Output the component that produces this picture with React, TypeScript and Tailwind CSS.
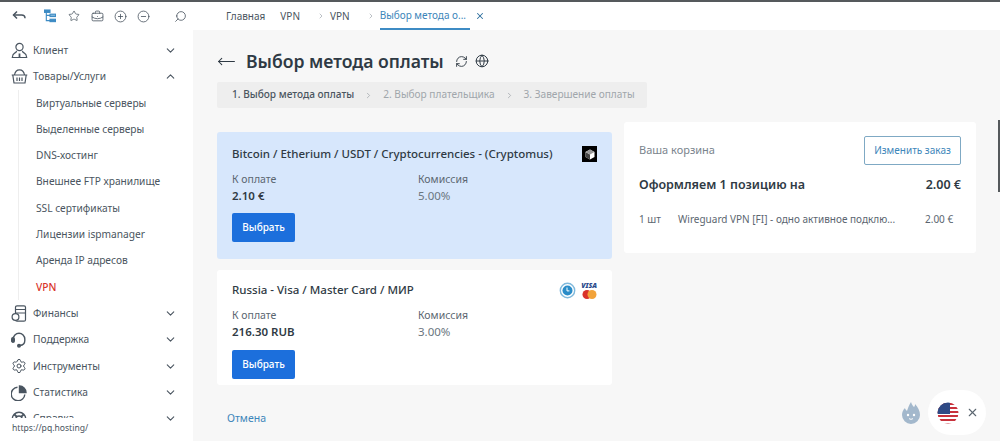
import { ChevronDown, ChevronUp, ChevronRight, X, Search, Star, CirclePlus, CircleMinus, MoveLeft, RefreshCw, Globe, BriefcaseBusiness, Settings } from "lucide-react";

const subItems = ["Виртуальные серверы", "Выделенные серверы", "DNS-хостинг", "Внешнее FTP хранилище", "SSL сертификаты", "Лицензии ispmanager", "Аренда IP адресов", "VPN"];

function BackIcon() {
  return (
    <svg width="14" height="12" viewBox="0 0 14 12" fill="none" stroke="currentColor" strokeWidth="1.5">
      <path d="M5 1.5 1.5 5 5 8.5" />
      <path d="M1.5 5h8c2 0 3.5 1.2 3.5 3.2" />
    </svg>
  );
}

function TreeIcon() {
  return (
    <svg width="12" height="14" viewBox="0 0 13 14" fill="none" stroke="#3d8bc4" strokeWidth="1.2" className="ml-[18px]">
      <rect x="0.5" y="0.5" width="6" height="2.6" fill="#3d8bc4" />
      <rect x="6.5" y="5" width="6" height="2.6" fill="#7db4da" />
      <rect x="6.5" y="10.5" width="6" height="2.6" fill="#3d8bc4" />
      <path d="M2.5 3v9h4M2.5 6.3h4" />
    </svg>
  );
}

function UserIcon() {
  return (
    <svg width="17" height="17" viewBox="0 0 17 17" fill="none" stroke="currentColor" strokeWidth="1.2">
      <circle cx="8.5" cy="5" r="3.6" />
      <path d="M5.6 8.8c-.2 1.2-.8 1.8-2 2.3-1.3.6-2 1.5-2.3 4.4h14.4c-.3-2.9-1-3.8-2.3-4.4-1.2-.5-1.8-1.1-2-2.3" />
      <path d="M8.5 11.5v4" strokeWidth="1.8" />
    </svg>
  );
}

function BasketIcon() {
  return (
    <svg width="17" height="15" viewBox="0 0 17 15" fill="none" stroke="currentColor" strokeWidth="1.2">
      <path d="M3.5 6c.5-3.4 2.4-5.2 5-5.2s4.5 1.8 5 5.2" />
      <path d="M.7 6h15.6M1.8 6l1.2 8h11l1.2-8" />
      <path d="M6 8.5V12M8.5 8.5V12M11 8.5V12" />
    </svg>
  );
}

function FinanceIcon() {
  return (
    <svg width="16" height="17" viewBox="0 0 16 17" fill="none" stroke="currentColor" strokeWidth="1.2">
      <rect x="4.5" y="0.8" width="10" height="15.4" rx="1.5" />
      <path d="M4.5 4.5h10M4.5 8h10" />
      <circle cx="4.5" cy="12" r="3.4" fill="#fff" />
    </svg>
  );
}

function HeadsetIcon() {
  return (
    <svg width="16" height="17" viewBox="0 0 16 17" fill="none" stroke="currentColor" strokeWidth="1.4">
      <path d="M2.2 9.5V8a5.8 5.8 0 0 1 11.6 0v1.5c0 2.8-2 4.7-5 5" />
      <rect x="0.7" y="6.8" width="2.6" height="4.4" rx="1.3" fill="currentColor" />
      <circle cx="8" cy="14.7" r="1.3" fill="currentColor" />
    </svg>
  );
}

function PieIcon() {
  return (
    <svg width="16" height="16" viewBox="0 0 16 16" fill="none" stroke="currentColor" strokeWidth="1.4">
      <path d="M6.5 2.2a6.800 6.800 0 1 0 7.300 7.300" />
      <path d="M8.5 1v6.500H15A6.500 6.500 0 0 0 8.500 1z" fill="currentColor" />
    </svg>
  );
}

function HelpIcon() {
  return (
    <svg width="16" height="16" viewBox="0 0 16 16" fill="none" stroke="currentColor" strokeWidth="1.4">
      <circle cx="8" cy="8" r="6.8" />
      <circle cx="8" cy="8" r="3" />
      <path d="M3.2 3.2l2.7 2.7M12.800 3.200l-2.700 2.700" strokeWidth="2" />
    </svg>
  );
}

function MenuRow({ icon, label, open }: { icon: React.ReactNode; label: string; open?: boolean }) {
  return (
    <div className="flex h-[26.3px] items-center pl-[11px] pr-[16px] text-[#4a5560]">
      <span className="flex w-[22px] shrink-0 items-center">{icon}</span>
      <span className="flex-1 text-[10.2px]">{label}</span>
      {open ? <ChevronUp size={13} strokeWidth={2} /> : <ChevronDown size={13} strokeWidth={2} />}
    </div>
  );
}

function Sidebar() {
  return (
    <aside className="h-full w-[193px] shrink-0 overflow-hidden bg-white pt-[7.5px]">
      <MenuRow icon={<UserIcon />} label="Клиент" />
      <MenuRow icon={<BasketIcon />} label="Товары/Услуги" open />
      <div className="ml-[18px] border-l border-[#eeeeee] pl-[17px]">
        {subItems.map((item) => (
          <div key={item} className={`flex h-[26.3px] items-center text-[10.2px] ${item === "VPN" ? "font-medium text-[#d9342b]" : "text-[#4a5560]"}`}>
            {item}
          </div>
        ))}
      </div>
      <MenuRow icon={<FinanceIcon />} label="Финансы" />
      <MenuRow icon={<HeadsetIcon />} label="Поддержка" />
      <MenuRow icon={<Settings size={16} strokeWidth={1.5} />} label="Инструменты" />
      <MenuRow icon={<PieIcon />} label="Статистика" />
      <MenuRow icon={<HelpIcon />} label="Справка" />
    </aside>
  );
}

function TopBar() {
  return (
    <header className="flex h-[30px] shrink-0 border-t-2 border-[#55595c] bg-white">
      <div className="flex w-[193px] shrink-0 items-center pl-[12px] text-[#4a5560]">
        <BackIcon />
        <TreeIcon />
        <Star size={12} strokeWidth={1.5} className="ml-[12px]" />
        <BriefcaseBusiness size={13} strokeWidth={1.5} className="ml-[11px]" />
        <CirclePlus size={13} strokeWidth={1.5} className="ml-[10px]" />
        <CircleMinus size={13} strokeWidth={1.5} className="ml-[10px]" />
        <Search size={13} strokeWidth={1.5} className="ml-[24px] -scale-x-100" />
      </div>
      <nav className="flex flex-1 items-center pl-[33px] text-[10px] text-[#4a5560]">
        <span>Главная</span>
        <span className="ml-[15px]">VPN</span>
        <ChevronRight size={8} className="ml-[17px] text-[#9aa2a9]" />
        <span className="ml-[5px]">VPN</span>
        <ChevronRight size={8} className="ml-[17px] text-[#9aa2a9]" />
        <span className="ml-[5px] flex h-full items-center border-b-2 border-[#3d8bc4] pr-[4px] text-[#3d86ba]">Выбор метода о...</span>
        <X size={10} strokeWidth={2.5} className="ml-[5px] text-[#2f6f9f]" />
      </nav>
    </header>
  );
}

function PayCard({ title, amount, fee, logo, active }: { title: string; amount: string; fee: string; logo: React.ReactNode; active?: boolean }) {
  return (
    <div className={`w-[395px] rounded-[3px] px-[15px] ${active ? "bg-[#d7e7fc] pb-[17px] pt-[13px]" : "bg-white pb-[6px] pt-[11px]"}`}>
      <div className="flex h-[18px] items-center justify-between">
        <span className="text-[11.5px] font-medium text-[#2f3a44]">{title}</span>
        {logo}
      </div>
      <div className="mt-[9px] flex">
        <div className="w-[186px]">
          <div className="text-[10.5px] leading-[14px] text-[#5b6670]">К оплате</div>
          <div className="mt-[2px] text-[11.5px] font-semibold leading-[16px] text-[#2f3a44]">{amount}</div>
        </div>
        <div>
          <div className="text-[10.5px] leading-[14px] text-[#5b6670]">Комиссия</div>
          <div className="mt-[2px] text-[11.5px] leading-[16px] text-[#6b7680]">{fee}</div>
        </div>
      </div>
      <button className={`h-[29px] w-[63px] rounded-[2px] bg-[#1c6fdc] text-[10px] font-medium text-white ${active ? "mt-[9px]" : "mt-[10px]"}`}>Выбрать</button>
    </div>
  );
}

function CryptomusLogo() {
  return (
    <span className="flex h-[16px] w-[15px] items-center justify-center bg-black">
      <svg width="10" height="11" viewBox="0 0 10 11">
        <path d="M5 .5 9.5 3v5L5 10.5.5 8V3z" fill="#fff" />
        <path d="M.5 3 5 5.5v5L.5 8z" fill="#444" />
        <path d="M5 .5 9.5 3 5 5.500.5 3z" fill="#999" />
      </svg>
    </span>
  );
}

function CardLogos() {
  return (
    <span className="flex items-center gap-[5px]">
      <svg width="17" height="17" viewBox="0 0 17 17">
        <circle cx="8.5" cy="8.5" r="7.2" fill="none" stroke="#7fb9dc" strokeWidth="1.4" />
        <circle cx="8.5" cy="8.5" r="5" fill="#2a8cc8" />
        <path d="M8 5.5v3.4h2.4" fill="none" stroke="#fff" strokeWidth="1" />
      </svg>
      <span className="flex flex-col items-center">
        <span className="text-[7px] font-black italic leading-[8px] text-[#2a4a8c]">VISA</span>
        <svg width="15" height="9" viewBox="0 0 15 9">
          <circle cx="5" cy="4.5" r="4.5" fill="#d9322a" />
          <circle cx="10" cy="4.5" r="4.5" fill="#f2a33a" />
        </svg>
      </span>
    </span>
  );
}

function Cart() {
  return (
    <div className="h-[131px] w-[352px] rounded-[3px] bg-white px-[15px] pt-[14px]">
      <div className="flex items-center justify-between">
        <span className="text-[11px] text-[#7a848d]">Ваша корзина</span>
        <button className="h-[29px] w-[97px] rounded-[2px] border border-[#7fa9c4] text-[10px] text-[#3d86ba]">Изменить заказ</button>
      </div>
      <div className="mt-[11px] flex items-center justify-between text-[12.5px] font-semibold text-[#2f3a44]">
        <span>Оформляем 1 позицию на</span>
        <span>2.00 €</span>
      </div>
      <div className="mt-[17px] flex items-center text-[10px] text-[#5b6670]">
        <span className="w-[39px]">1 шт</span>
        <span className="w-[247px]">Wireguard VPN [FI] - одно активное подклю...</span>
        <span>2.00 €</span>
      </div>
    </div>
  );
}

export default function App() {
  return (
    <div className="relative flex h-[441px] w-[1000px] flex-col overflow-hidden bg-[#f7f7f7] font-['Noto_Sans',sans-serif]">
      <TopBar />
      <div className="flex min-h-0 flex-1">
        <Sidebar />
        <main className="flex-1 pl-[24px] pt-[17px]">
          <div className="flex h-[28px] items-center text-[#2f3a44]">
            <MoveLeft size={19} strokeWidth={1.3} />
            <h1 className="ml-[10px] text-[17.6px] font-semibold">Выбор метода оплаты</h1>
            <RefreshCw size={13} strokeWidth={1.7} className="ml-[11px]" />
            <Globe size={14} strokeWidth={1.7} className="ml-[7px]" />
          </div>
          <div className="mt-[7px] flex h-[26px] w-[430px] items-center rounded-[2px] bg-[#eeeeee] pl-[15px] text-[10.1px] text-[#a0a6ab]">
            <span className="font-medium text-[#4a5560]">1. Выбор метода оплаты</span>
            <ChevronRight size={9} className="mx-[10px]" />
            <span>2. Выбор плательщика</span>
            <ChevronRight size={9} className="mx-[10px]" />
            <span>3. Завершение оплаты</span>
          </div>
          <div className="mt-[14px] flex items-start gap-[12px]">
            <div className="mt-[10px] flex flex-col gap-[11px]">
              <PayCard active title="Bitcoin / Etherium / USDT / Cryptocurrencies - (Cryptomus)" amount="2.10 €" fee="5.00%" logo={<CryptomusLogo />} />
              <PayCard title="Russia - Visa / Master Card / МИР" amount="216.30 RUB" fee="3.00%" logo={<CardLogos />} />
              <span className="ml-[10px] mt-[15px] text-[10.5px] text-[#3d86ba]">Отмена</span>
            </div>
            <Cart />
          </div>
        </main>
      </div>

      {/* scrollbar thumb */}
      <div className="absolute right-0 top-[120px] h-[72px] w-[2px] bg-[#55595c]" />

      {/* status bar tooltip */}
      <div className="absolute bottom-0 left-0 h-[23px] w-[100px] bg-white pl-[12px] pt-[3px] text-[8.6px] leading-[14px] text-[#4a5560]">https://pq.hosting/</div>

      {/* floating widgets */}
      <svg className="absolute left-[902px] top-[402px]" width="18" height="22" viewBox="0 0 18 22">
        <path d="M9 0c1 3 2 4 3 5 1-1 1-2 1-3 3 3 5 7 5 11a9 9 0 0 1-18 0c0-3 1-5 3-7 0 1 1 2 2 3 1-3 2-6 4-9z" fill="#a3b8cc" />
        <circle cx="6" cy="13" r="1.2" fill="#fff" />
        <circle cx="12" cy="13" r="1.2" fill="#fff" />
        <path d="M7 16.5c1 1 3 1 4 0" stroke="#fff" fill="none" />
      </svg>
      <div className="absolute left-[928px] top-[390px] flex h-[45px] w-[58px] items-center rounded-full bg-white pl-[9px]">
        <svg width="22" height="22" viewBox="0 0 22 22">
          <clipPath id="flag"><circle cx="11" cy="11" r="10.5" /></clipPath>
          <g clipPath="url(#flag)">
            <rect width="22" height="22" fill="#fff" />
            <rect y="1" width="22" height="2" fill="#c8323c" />
            <rect y="5" width="22" height="2" fill="#c8323c" />
            <rect y="9" width="22" height="2" fill="#c8323c" />
            <rect y="13" width="22" height="2" fill="#c8323c" />
            <rect y="17" width="22" height="2" fill="#c8323c" />
            <rect y="21" width="22" height="1" fill="#c8323c" />
            <rect width="13" height="12" fill="#2f4a85" />
          </g>
        </svg>
        <X size={13} strokeWidth={2} className="ml-[7px] text-[#5b6670]" />
      </div>
    </div>
  );
}
